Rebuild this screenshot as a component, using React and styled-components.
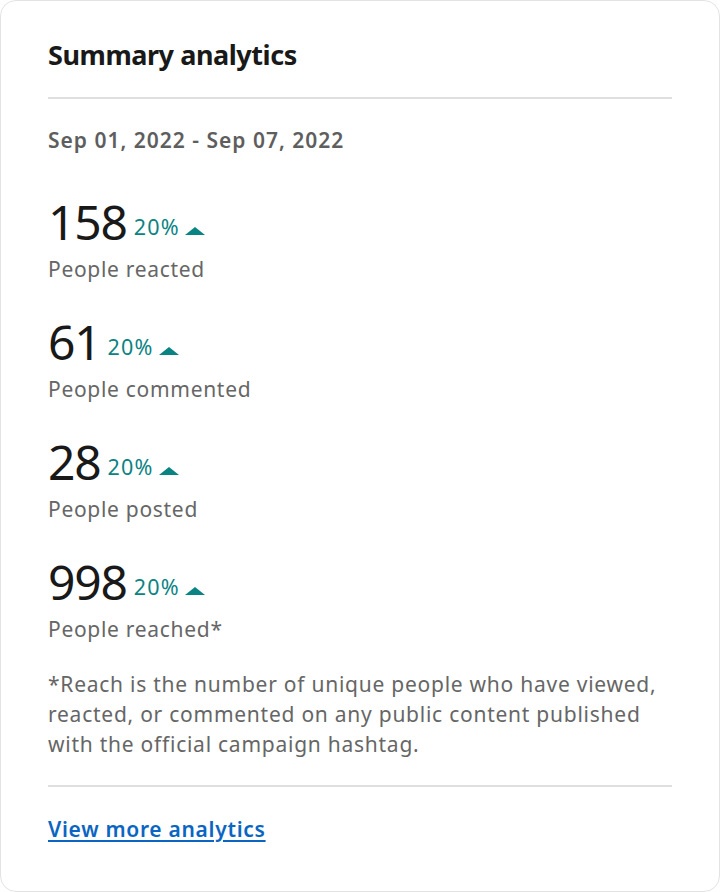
import React from 'react';
import styled, { createGlobalStyle } from 'styled-components';

const GlobalStyle = createGlobalStyle`
html, body {
    margin: 0;
    padding: 0;
    background: #ffffff;
}
body {
    font-family: "Noto Sans", "Open Sans", sans-serif;
    -webkit-font-smoothing: antialiased;
}
`;

const Card = styled.section`
box-sizing: border-box;
width: 720px;
height: 892px;
padding: 0 47px;
border: 1.5px solid #e3e3e3;
border-radius: 16px;
background: #ffffff;
display: flex;
flex-direction: column;
`;

const Title = styled.h2`
margin: 0;
padding: 34px 0 22px;
font-size: 27px;
line-height: 40px;
font-weight: 700;
letter-spacing: -0.45px;
color: #191919;
`;

const Divider = styled.hr`
flex-shrink: 0;
margin: 0;
border: none;
height: 2px;
background: #e0e0e0;
`;

const DateRange = styled.div`
margin: 25px 0 37px;
font-size: 21px;
line-height: 32px;
font-weight: 600;
letter-spacing: 1px;
color: #5e5e5e;
`;

const StatList = styled.div`
display: flex;
flex-direction: column;
gap: 28px;
`;

const Stat = styled.div`
display: flex;
flex-direction: column;
`;

const ValueRow = styled.div`
font-size: 48px;
line-height: 58px;
white-space: nowrap;
`;

const Value = styled.span`
font-weight: 400;
letter-spacing: -1.2px;
color: #191919;
`;

const Change = styled.span`
display: inline-flex;
align-items: baseline;
gap: 5px;
margin-left: 7px;
vertical-align: 5px;
font-size: 21.5px;
line-height: 30px;
letter-spacing: 1.2px;
color: #0a8383;
`;

const Arrow = styled.span`
display: inline-block;
width: 0;
height: 0;
border-left: 10px solid transparent;
border-right: 10px solid transparent;
border-bottom: 8px solid #0a8383;
`;

const Label = styled.div`
margin-top: 2px;
font-size: 21px;
line-height: 32px;
letter-spacing: 0.7px;
color: #666666;
`;

const Footnote = styled.p`
margin: 24px 0 26px;
font-size: 21px;
line-height: 30px;
letter-spacing: 0.75px;
color: #666666;
`;

const Footer = styled.div`
padding: 26px 0;
`;

const MoreLink = styled.a`
font-size: 21px;
line-height: 32px;
font-weight: 600;
letter-spacing: 0.7px;
color: #0a66c2;
text-decoration: underline;
text-underline-offset: 3px;
`;

const stats = [
    { value: 158, change: '20%', label: 'People reacted' },
    { value: 61, change: '20%', label: 'People commented' },
    { value: 28, change: '20%', label: 'People posted' },
    { value: 998, change: '20%', label: 'People reached*' }
];

export default function App() {
    return (
        <>
            <GlobalStyle />
            <Card>
                <Title>Summary analytics</Title>
                <Divider />
                <DateRange>Sep 01, 2022 - Sep 07, 2022</DateRange>
                <StatList>
                    {stats.map((s, i) => (
                        <Stat key={i}>
                            <ValueRow>
                                <Value>{s.value}</Value>
                                <Change>
                                    {s.change}
                                    <Arrow />
                                </Change>
                            </ValueRow>
                            <Label>{s.label}</Label>
                        </Stat>
                    ))}
                </StatList>
                <Footnote>
                    *Reach is the number of unique people who have viewed, reacted, or commented on any public content published with the official campaign hashtag.
                </Footnote>
                <Divider />
                <Footer>
                    <MoreLink href="#">View more analytics</MoreLink>
                </Footer>
            </Card>
        </>
    );
}
